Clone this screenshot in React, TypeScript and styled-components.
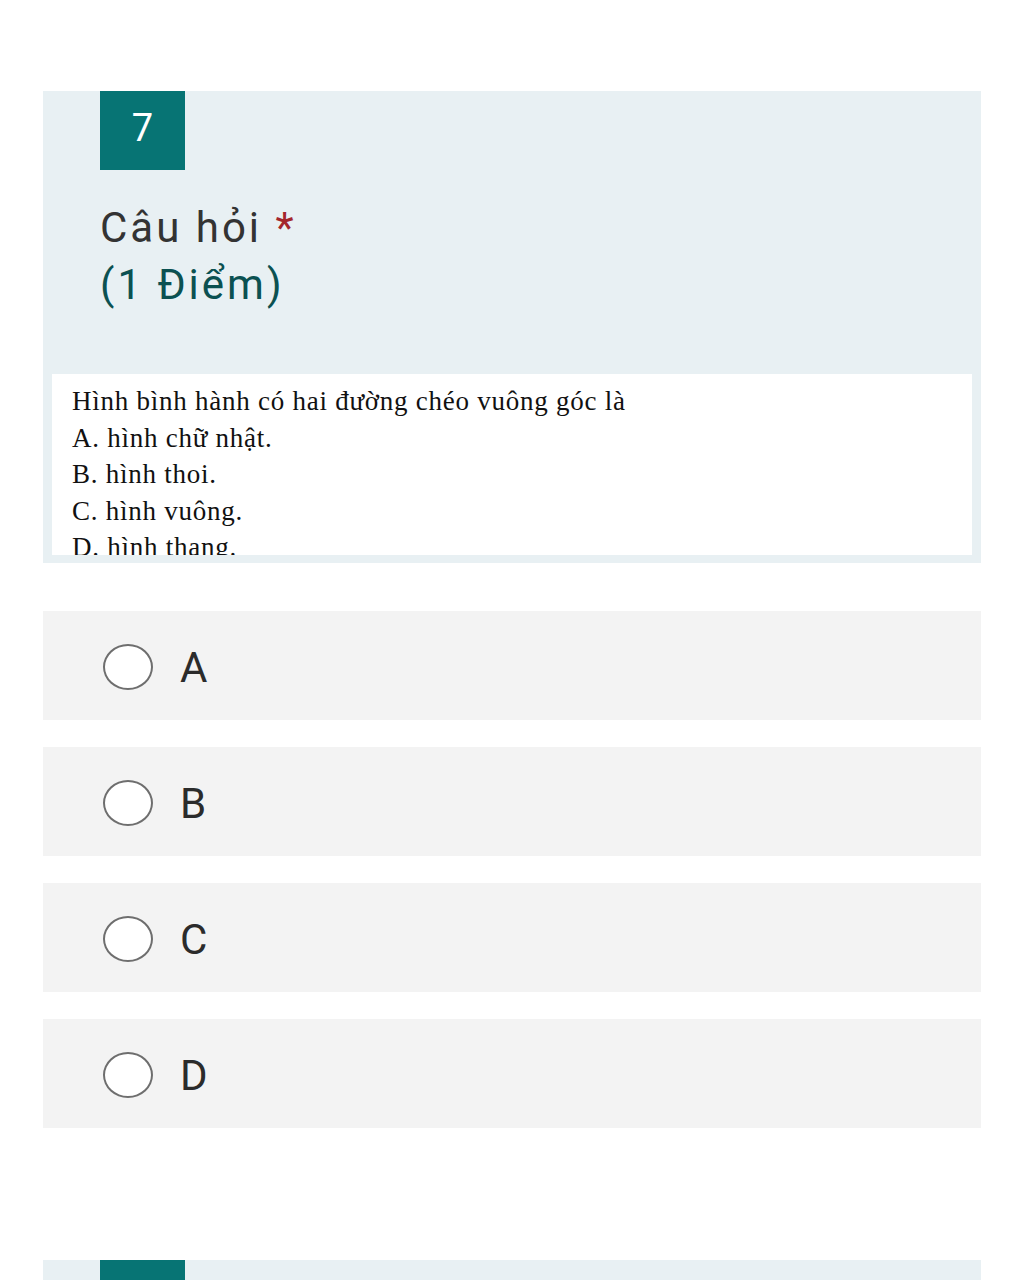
import React from "react";
import styled, { createGlobalStyle } from "styled-components";

const Global = createGlobalStyle`
  html, body { margin: 0; padding: 0; background: #ffffff; }
  body { font-family: Roboto, "Noto Sans", sans-serif; }
`;

const Page = styled.div`
  width: 1024px;
  height: 1280px;
  overflow: hidden;
  padding: 91px 43px 0 43px;
  box-sizing: border-box;
  display: flex;
  flex-direction: column;
`;

const QuestionCard = styled.section`
  background: #e8f0f3;
  display: flex;
  flex-direction: column;
  height: 472px;
  box-sizing: border-box;
  padding: 0 9px 8px 9px;
`;

const Badge = styled.div`
  width: 85px;
  height: 79px;
  margin-left: 48px;
  background: #077474;
  color: #ffffff;
  font-size: 38px;
  display: flex;
  align-items: center;
  justify-content: center;
  line-height: 1;
  padding-bottom: 6px;
  box-sizing: border-box;
`;

const Title = styled.h2`
  margin: 29px 0 0 48px;
  font-weight: 400;
  font-size: 42px;
  line-height: 57px;
  color: #333333;
  letter-spacing: 3px;
`;

const Star = styled.span`
  color: #a4262c;
`;

const Points = styled.div`
  color: #0b5151;
`;

const Content = styled.div`
  margin-top: 61px;
  background: #ffffff;
  flex: 1;
  overflow: hidden;
  padding: 9px 20px 0 20px;
  font-family: "Liberation Serif", "Times New Roman", serif;
  font-size: 27px;
  line-height: 36.5px;
  letter-spacing: 0.75px;
  color: #111111;
`;

const Line = styled.div``;

const Options = styled.div`
  display: flex;
  flex-direction: column;
  gap: 27px;
  margin-top: 48px;
`;

const Option = styled.label`
  height: 109px;
  background: #f3f3f3;
  display: flex;
  align-items: center;
  padding-left: 60px;
  box-sizing: border-box;
  gap: 27px;
`;

const Radio = styled.span`
  width: 46px;
  height: 42px;
  border: 2.5px solid #6e6e6e;
  border-radius: 50%;
  background: #ffffff;
  flex: none;
  margin-top: 2px;
`;

const OptionText = styled.span`
  font-size: 42px;
  color: #2b2b2b;
  line-height: 1;
  margin-top: 4px;
`;

const NextCard = styled.section`
  margin-top: 132px;
  background: #e8f0f3;
  height: 40px;
  padding: 0 9px;
`;

const NextBadge = styled.div`
  width: 85px;
  height: 40px;
  margin-left: 48px;
  background: #077474;
`;

export default function App() {
  const lines = [
    "Hình bình hành có hai đường chéo vuông góc là",
    "A. hình chữ nhật.",
    "B. hình thoi.",
    "C. hình vuông.",
    "D. hình thang.",
  ];
  return (
    <>
      <Global />
      <Page>
        <QuestionCard>
          <Badge>7</Badge>
          <Title>
            Câu hỏi <Star>*</Star>
            <Points>(1 Điểm)</Points>
          </Title>
          <Content>
            {lines.map((l) => (
              <Line key={l}>{l}</Line>
            ))}
          </Content>
        </QuestionCard>
        <Options>
          {["A", "B", "C", "D"].map((o) => (
            <Option key={o}>
              <Radio />
              <OptionText>{o}</OptionText>
            </Option>
          ))}
        </Options>
        <NextCard>
          <NextBadge />
        </NextCard>
      </Page>
    </>
  );
}
